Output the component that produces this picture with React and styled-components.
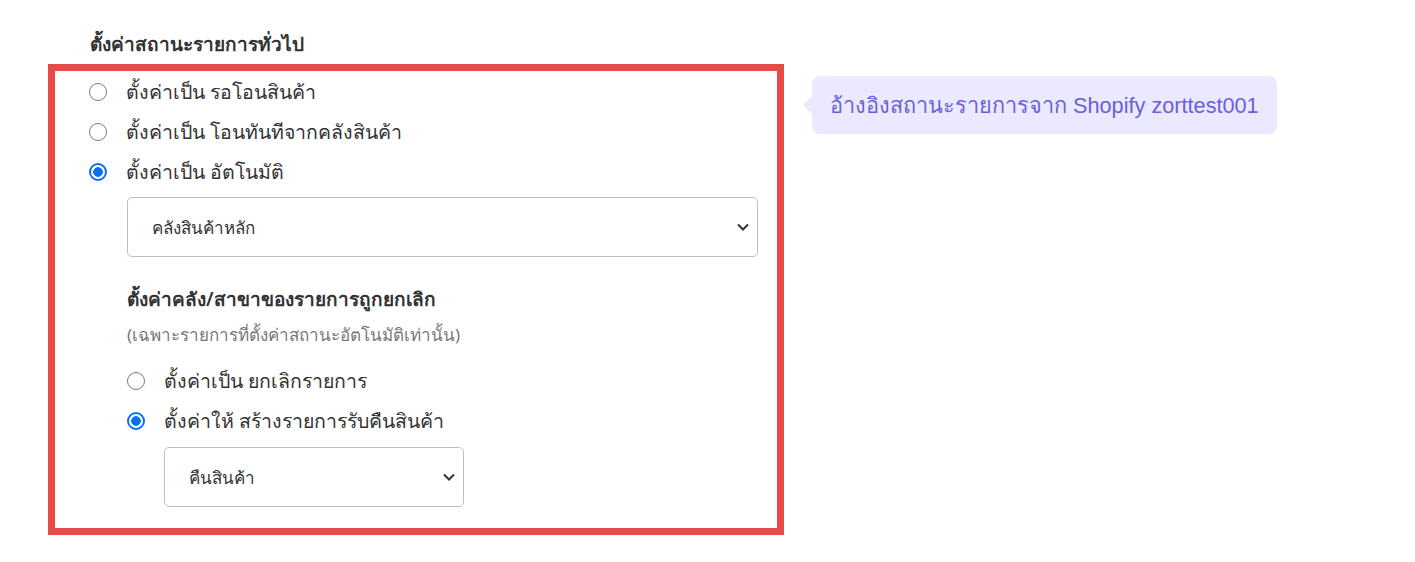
import styled, { createGlobalStyle } from "styled-components";

const GlobalStyle = createGlobalStyle`
  body {
    margin: 0;
    background: #ffffff;
    font-family: "Noto Sans", "Liberation Sans", sans-serif;
    color: #333333;
  }
`;

export default function App() {
  return (
    <Page>
      <GlobalStyle />
      <Title>ตั้งค่าสถานะรายการทั่วไป</Title>
      <Row>
        <Frame>
          <RadioRow>
            <Radio />
            <Label>ตั้งค่าเป็น รอโอนสินค้า</Label>
          </RadioRow>
          <RadioRow>
            <Radio />
            <Label>ตั้งค่าเป็น โอนทันทีจากคลังสินค้า</Label>
          </RadioRow>
          <RadioRow>
            <Radio checked />
            <Label>ตั้งค่าเป็น อัตโนมัติ</Label>
          </RadioRow>
          <Nested>
            <SelectBox width="631px">
              <Select defaultValue="main">
                <option value="main">คลังสินค้าหลัก</option>
              </Select>
              <Chevron />
            </SelectBox>
            <SubTitle>ตั้งค่าคลัง/สาขาของรายการถูกยกเลิก</SubTitle>
            <Note>(เฉพาะรายการที่ตั้งค่าสถานะอัตโนมัติเท่านั้น)</Note>
            <SubRadios>
              <RadioRow>
                <Radio />
                <Label>ตั้งค่าเป็น ยกเลิกรายการ</Label>
              </RadioRow>
              <RadioRow>
                <Radio checked />
                <Label>ตั้งค่าให้ สร้างรายการรับคืนสินค้า</Label>
              </RadioRow>
              <SubSelect>
                <SelectBox width="300px">
                  <Select defaultValue="return">
                    <option value="return">คืนสินค้า</option>
                  </Select>
                  <Chevron />
                </SelectBox>
              </SubSelect>
            </SubRadios>
          </Nested>
        </Frame>
        <Hint>อ้างอิงสถานะรายการจาก Shopify zorttest001</Hint>
      </Row>
    </Page>
  );
}

function Chevron() {
  return (
    <ChevronIcon width="12" height="8" viewBox="0 0 12 8">
      <path d="M1 1.5 L6 6.5 L11 1.5" fill="none" stroke="#333" strokeWidth="2" />
    </ChevronIcon>
  );
}

const Page = styled.div`
  padding: 30px 0 0 48px;
`;

const Title = styled.div`
  margin-left: 42px;
  font-size: 19px;
  font-weight: 600;
  line-height: 28px;
  color: #333333;
  margin-bottom: 6px;
`;

const Row = styled.div`
  display: flex;
  align-items: flex-start;
`;

const Frame = styled.div`
  width: 736px;
  box-sizing: border-box;
  border: 7px solid #e84a45;
  padding: 1px 0 21px 34px;
`;

const RadioRow = styled.div`
  display: flex;
  align-items: center;
  height: 40px;
  gap: 19px;
`;

const Radio = styled.span`
  width: 18px;
  height: 18px;
  box-sizing: border-box;
  border-radius: 50%;
  flex-shrink: 0;
  border: ${(p) => (p.checked ? "2px solid #0b6ff6" : "1.5px solid #7a7a7a")};
  background: ${(p) =>
    p.checked
      ? "radial-gradient(circle, #0b6ff6 0 4.5px, #ffffff 5px)"
      : "#ffffff"};
`;

const Label = styled.span`
  font-size: 19.5px;
  color: #333333;
`;

const Nested = styled.div`
  padding-left: 38px;
  padding-top: 5px;
`;

const SelectBox = styled.div`
  position: relative;
  width: ${(p) => p.width};
`;

const Select = styled.select`
  appearance: none;
  width: 100%;
  height: 60px;
  box-sizing: border-box;
  border: 1px solid #b9bfc6;
  border-radius: 5px;
  background: #ffffff;
  padding: 0 40px 0 24px;
  font-family: "Noto Sans", "Liberation Sans", sans-serif;
  font-size: 17px;
  color: #333333;
  outline: none;
`;

const ChevronIcon = styled.svg`
  position: absolute;
  right: 9px;
  top: 26px;
  pointer-events: none;
`;

const SubSelect = styled.div`
  margin-top: 6px;
  padding-left: 37px;
`;

const SubTitle = styled.div`
  margin-top: 28px;
  font-size: 19px;
  font-weight: 600;
  line-height: 28px;
  color: #333333;
`;

const Note = styled.div`
  margin-top: 10px;
  font-size: 17px;
  line-height: 24px;
  color: #777777;
`;

const SubRadios = styled.div`
  margin-top: 14px;
`;

const Hint = styled.div`
  position: relative;
  margin: 12px 0 0 28px;
  padding: 0 18px;
  height: 58px;
  display: flex;
  align-items: center;
  background: #ebe9ff;
  border-radius: 8px;
  color: #6a5fd9;
  font-family: "Liberation Sans", "Noto Sans", sans-serif;
  font-size: 21.7px;

  &::before {
    content: "";
    position: absolute;
    left: -9px;
    top: 50%;
    margin-top: -9px;
    border-top: 9px solid transparent;
    border-bottom: 9px solid transparent;
    border-right: 9px solid #ebe9ff;
  }
`;
